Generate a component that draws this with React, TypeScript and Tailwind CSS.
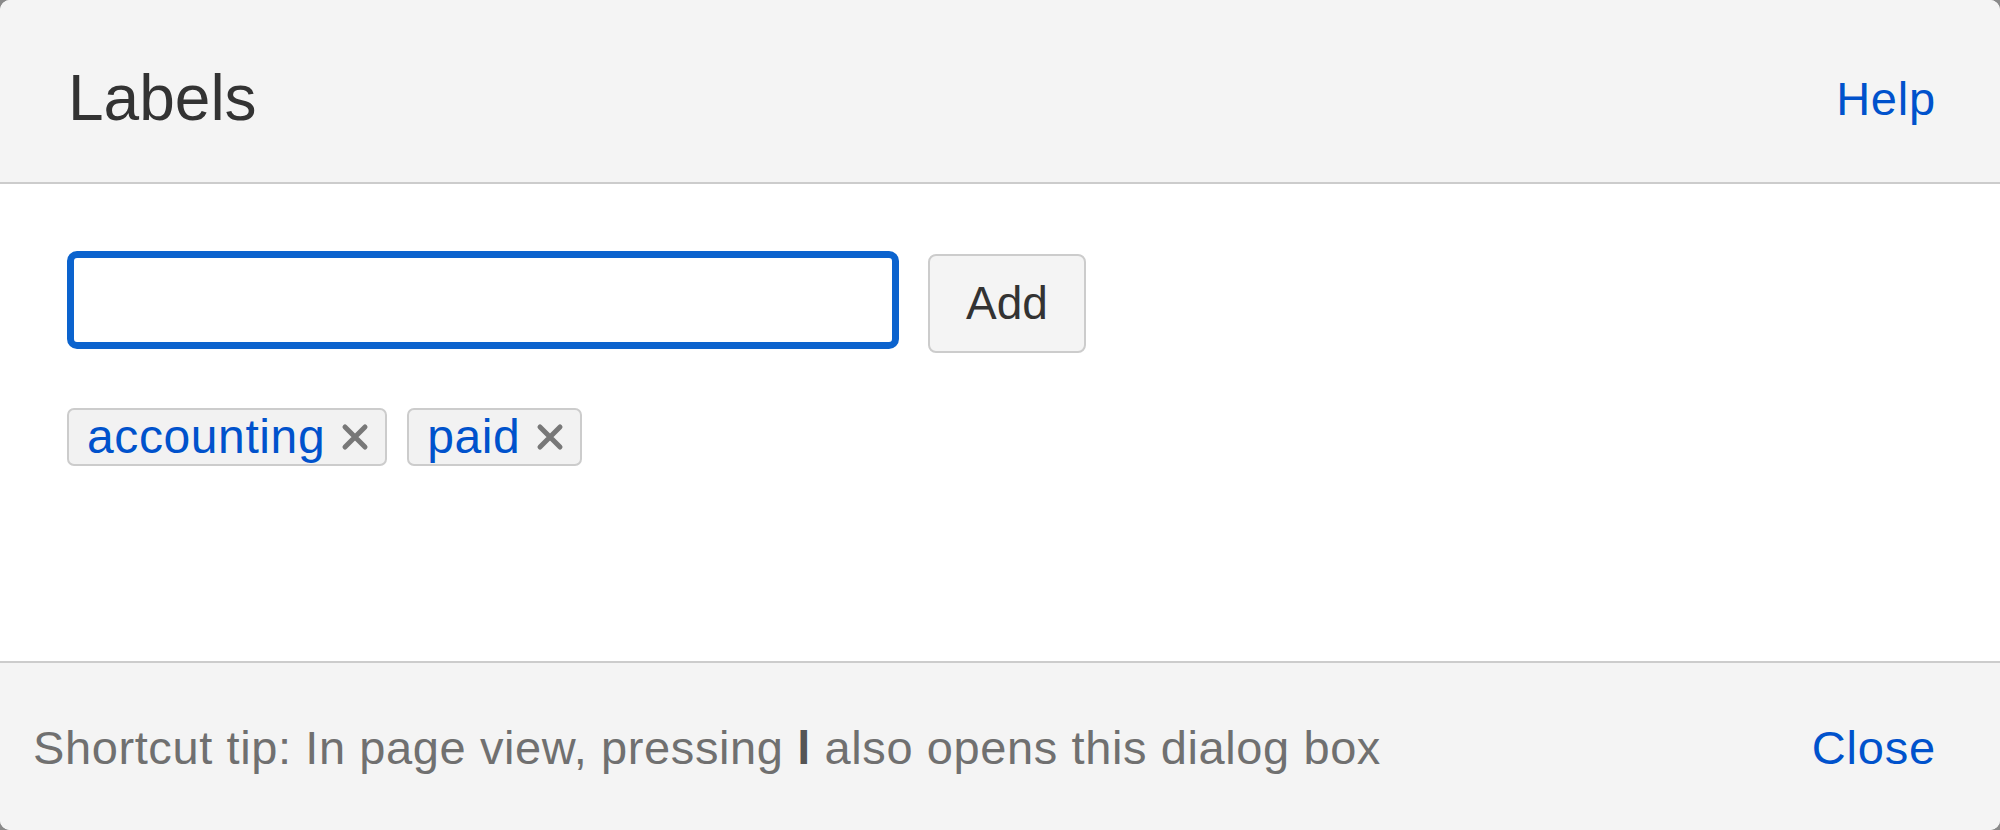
import React, { useState } from "react"

const font = { fontFamily: '"Liberation Sans", Arial, sans-serif' }

const RemoveIcon = () => (
  <svg width="28" height="28" viewBox="0 0 28 28" className="shrink-0">
    <path
      d="M4 4 L24 24 M24 4 L4 24"
      stroke="#787878"
      strokeWidth="5"
      strokeLinecap="round"
    />
  </svg>
)

const Tag = ({ name, onRemove }: { name: string; onRemove: () => void }) => (
  <div className="flex h-[58px] items-center gap-[16px] rounded-[7px] border-2 border-[#cccccc] bg-[#f2f2f2] pl-[18px] pr-[16px]">
    <a href="#" className="text-[48px] leading-none tracking-[0.6px] text-[#0052cc]">
      {name}
    </a>
    <button onClick={onRemove} className="flex items-center">
      <RemoveIcon />
    </button>
  </div>
)

export default function App() {
  const [labels, setLabels] = useState(["accounting", "paid"])
  const [value, setValue] = useState("")

  const addLabel = () => {
    if (!value.trim()) return
    setLabels([...labels, value.trim()])
    setValue("")
  }

  return (
    <div className="h-[830px] w-[2000px] bg-[#8a8a8a]" style={font}>
      <div className="flex h-full flex-col overflow-hidden rounded-[10px] bg-white">
        {/* header */}
        <div className="flex h-[184px] shrink-0 items-center justify-between border-b-2 border-[#cccccc] bg-[#f4f4f4] pl-[68px] pr-[64px] pt-[14px]">
          <h2 className="text-[64px] leading-none text-[#333333]">Labels</h2>
          <a href="#" className="text-[47px] leading-none tracking-[0.8px] text-[#0052cc]">
            Help
          </a>
        </div>

        {/* body */}
        <div className="flex flex-1 flex-col gap-[55px] px-[67px] pt-[67px]">
          <div className="flex items-start gap-[29px]">
            <input
              value={value}
              onChange={(e) => setValue(e.target.value)}
              className="h-[98px] w-[832px] rounded-[10px] border-[7px] border-[#0b63ce] bg-white px-4 text-[46px] outline-none"
            />
            <button
              onClick={addLabel}
              className="mt-[3px] h-[99px] w-[158px] rounded-[8px] border-2 border-[#cccccc] bg-[#f4f4f4] text-[46px] text-[#333333]"
            >
              Add
            </button>
          </div>
          <div className="flex gap-[20px]">
            {labels.map((l, i) => (
              <Tag
                key={l + i}
                name={l}
                onRemove={() => setLabels(labels.filter((_, j) => j !== i))}
              />
            ))}
          </div>
        </div>

        {/* footer */}
        <div className="flex h-[169px] shrink-0 items-center justify-between border-t-2 border-[#cccccc] bg-[#f4f4f4] pl-[33px] pr-[64px] pt-[2px]">
          <p className="text-[47px] leading-none tracking-[0.6px] text-[#707070]">
            Shortcut tip: In page view, pressing <b className="text-[#555555]">l</b> also opens this dialog box
          </p>
          <a href="#" className="text-[47px] leading-none tracking-[0.8px] text-[#0052cc]">
            Close
          </a>
        </div>
      </div>
    </div>
  )
}
